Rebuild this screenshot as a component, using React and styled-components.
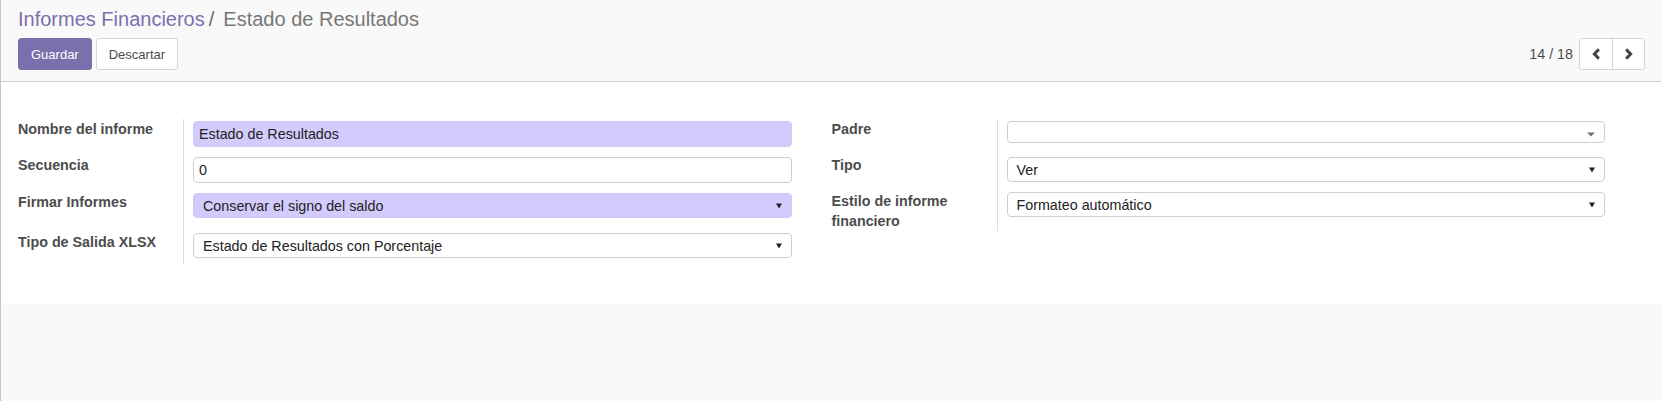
import React from 'react';
import styled, { createGlobalStyle } from 'styled-components';

const GlobalStyle = createGlobalStyle`
  html, body { margin: 0; padding: 0; background: #f9f9f9; }
  body {
    font-family: "Liberation Sans", Arial, sans-serif;
    font-size: 14.3px;
    color: #4c4c4c;
  }
  * { box-sizing: border-box; }
`;

const Page = styled.div`
  min-height: 401px;
  border-left: 1px solid #c4c4c4;
  background: #f9f9f9;
`;

const ControlPanel = styled.header`
  background: #f9f9f9;
  border-bottom: 1px solid #d0d0d0;
  padding: 5px 16px 11px 17px;
`;

const Breadcrumb = styled.div`
  font-size: 20px;
  line-height: 28px;
  color: #777777;
  display: flex;
  align-items: baseline;
`;

const Crumb = styled.span`
  color: ${(p) => (p.$link ? '#7c6fae' : '#777777')};
`;

const Sep = styled.span`
  color: #666;
  margin: 0 9px 0 4px;
`;

const ButtonRow = styled.div`
  margin-top: 5px;
  display: flex;
  justify-content: space-between;
  align-items: center;
`;

const Buttons = styled.div`
  display: flex;
  gap: 4px;
`;

const Button = styled.button`
  height: 32px;
  padding: 0 12px;
  border-radius: 3px;
  font-family: "Liberation Sans", Arial, sans-serif;
  font-size: 13px;
  border: 1px solid ${(p) => (p.$primary ? '#7c6fae' : '#d6d6d6')};
  background: ${(p) => (p.$primary ? '#7c6fae' : '#ffffff')};
  color: ${(p) => (p.$primary ? '#ffffff' : '#4c4c4c')};
`;

const Pager = styled.div`
  display: flex;
  align-items: center;
  gap: 6px;
`;

const PagerValue = styled.span`
  font-size: 14.3px;
  color: #4c4c4c;
`;

const PagerGroup = styled.div`
  display: flex;
  height: 32px;
  border: 1px solid #d6d6d6;
  border-radius: 3px;
  background: #fff;
`;

const PagerButton = styled.button`
  width: 32px;
  height: 100%;
  border: none;
  background: transparent;
  display: flex;
  align-items: center;
  justify-content: center;
  padding: 0;
  & + & { border-left: 1px solid #d6d6d6; }
`;

const Sheet = styled.main`
  background: #ffffff;
  padding: 37px 56px 40px 17px;
  display: grid;
  grid-template-columns: 1fr 1fr;
  column-gap: 40px;
  align-items: start;
`;

const Group = styled.div`
  display: grid;
  grid-template-columns: 165px 1fr;
`;

const Label = styled.div`
  font-weight: bold;
  line-height: 20px;
  color: #4c4c4c;
  padding-top: ${(p) => p.$pt || 0}px;
  padding-right: 12px;
`;

const FieldCell = styled.div`
  border-left: 1px solid #dcdcdc;
  padding: 2px 0 ${(p) => p.$pb}px 9px;
`;

const TextInput = styled.input`
  display: block;
  width: 100%;
  height: ${(p) => p.$h || 26}px;
  border: 1px solid ${(p) => (p.$required ? '#d0c8f8' : '#cfcfcf')};
  background: ${(p) => (p.$required ? '#d3cbfb' : '#ffffff')};
  border-radius: 4px;
  padding: 0 5px;
  font-family: "Liberation Sans", Arial, sans-serif;
  font-size: 14.3px;
  color: #222;
  outline: none;
`;

const SelectBox = styled.div`
  display: flex;
  align-items: center;
  justify-content: space-between;
  height: ${(p) => p.$h || 25}px;
  border: 1px solid ${(p) => (p.$required ? '#d0c8f8' : '#cfcfcf')};
  background: ${(p) => (p.$required ? '#d3cbfb' : '#ffffff')};
  border-radius: 4px;
  padding: 0 9px 0 9px;
  font-size: 14.3px;
  color: #222;
`;

const Caret = ({ light }) =>
  light ? (
    <svg width="8" height="5" viewBox="0 0 8 5" style={{ marginTop: 4 }}>
      <polygon points="0,0.5 8,0.5 4,4.5" fill="#6f6f6f" />
    </svg>
  ) : (
    <svg width="6" height="6" viewBox="0 0 6 6">
      <polygon points="0,0.5 6,0.5 3,5.5" fill="#222" />
    </svg>
  );

const Chevron = ({ dir }) => (
  <svg width="9" height="12" viewBox="0 0 9 12">
    <polyline
      points={dir === 'left' ? '6.8,1.4 2.4,6 6.8,10.6' : '2.2,1.4 6.6,6 2.2,10.6'}
      fill="none"
      stroke="#444"
      strokeWidth="3"
      strokeLinejoin="miter"
    />
  </svg>
);

const leftFields = [
  { label: 'Nombre del informe', kind: 'input', value: 'Estado de Resultados', required: true, pb: 8 },
  { label: 'Secuencia', kind: 'input', value: '0', pb: 8 },
  { label: 'Firmar Informes', kind: 'select', value: 'Conservar el signo del saldo', required: true, pb: 13, pt: 1 },
  { label: 'Tipo de Salida XLSX', kind: 'select', value: 'Estado de Resultados con Porcentaje', pb: 6, pt: 1 },
];

const rightFields = [
  { label: 'Padre', kind: 'many2one', value: '', pb: 12, h: 22 },
  { label: 'Tipo', kind: 'select', value: 'Ver', pb: 8 },
  { label: 'Estilo de informe financiero', kind: 'select', value: 'Formateo automático', pb: 13, pt: 1 },
];

function Field({ f }) {
  if (f.kind === 'input') {
    return <TextInput readOnly value={f.value} $required={f.required} $h={f.h} />;
  }
  return (
    <SelectBox $required={f.required} $h={f.h}>
      <span>{f.value}</span>
      <Caret light={f.kind === 'many2one'} />
    </SelectBox>
  );
}

function FormGroup({ fields }) {
  return (
    <Group>
      {fields.map((f) => (
        <React.Fragment key={f.label}>
          <Label $pt={f.pt}>{f.label}</Label>
          <FieldCell $pb={f.pb}>
            <Field f={f} />
          </FieldCell>
        </React.Fragment>
      ))}
    </Group>
  );
}

export default function App() {
  return (
    <Page>
      <GlobalStyle />
      <ControlPanel>
        <Breadcrumb>
          <Crumb $link>Informes Financieros</Crumb>
          <Sep>/</Sep>
          <Crumb>Estado de Resultados</Crumb>
        </Breadcrumb>
        <ButtonRow>
          <Buttons>
            <Button $primary>Guardar</Button>
            <Button>Descartar</Button>
          </Buttons>
          <Pager>
            <PagerValue>14 / 18</PagerValue>
            <PagerGroup>
              <PagerButton aria-label="Anterior"><Chevron dir="left" /></PagerButton>
              <PagerButton aria-label="Siguiente"><Chevron dir="right" /></PagerButton>
            </PagerGroup>
          </Pager>
        </ButtonRow>
      </ControlPanel>
      <Sheet>
        <FormGroup fields={leftFields} />
        <FormGroup fields={rightFields} />
      </Sheet>
    </Page>
  );
}
